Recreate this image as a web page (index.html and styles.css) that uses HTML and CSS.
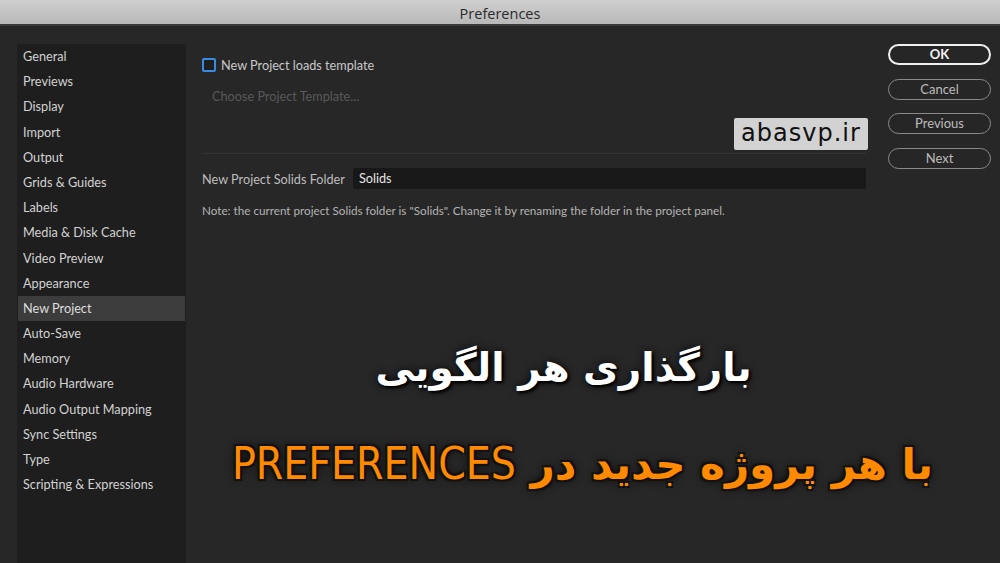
FILE: index.html
```html
<!DOCTYPE html>
<html lang="en">
<head>
<meta charset="utf-8">
<title>Preferences</title>
<link rel="stylesheet" href="styles.css">
</head>
<body>
<div class="titlebar">Preferences</div>
<div class="main">
  <ul class="sidebar">
    <li>General</li>
    <li>Previews</li>
    <li>Display</li>
    <li>Import</li>
    <li>Output</li>
    <li>Grids &amp; Guides</li>
    <li>Labels</li>
    <li>Media &amp; Disk Cache</li>
    <li>Video Preview</li>
    <li>Appearance</li>
    <li class="selected">New Project</li>
    <li>Auto-Save</li>
    <li>Memory</li>
    <li>Audio Hardware</li>
    <li>Audio Output Mapping</li>
    <li>Sync Settings</li>
    <li>Type</li>
    <li>Scripting &amp; Expressions</li>
  </ul>
  <div class="content">
    <label class="check-row"><span class="checkbox"></span><span>New Project loads template</span></label>
    <div class="choose">Choose Project Template...</div>
    <div class="separator"></div>
    <div class="field-row">
      <span class="field-label">New Project Solids Folder</span>
      <div class="field-input">Solids</div>
    </div>
    <p class="note">Note: the current project Solids folder is "Solids". Change it by renaming the folder in the project panel.</p>
  </div>
  <div class="buttons">
    <button class="btn primary">OK</button>
    <button class="btn">Cancel</button>
    <button class="btn">Previous</button>
    <button class="btn">Next</button>
  </div>
</div>
<div class="watermark">abasvp.ir</div>
<div class="headline line1" dir="rtl">بارگذاری هر الگویی</div>
<div class="headline line2" dir="rtl">با هر پروژه جدید در <span class="latin">PREFERENCES</span></div>
</body>
</html>
```
FILE: styles.css
```css
* { box-sizing: border-box; }
html, body { margin: 0; padding: 0; }
body {
  width: 1000px;
  height: 563px;
  overflow: hidden;
  background: #272727;
  font-family: Lato, "Open Sans", sans-serif;
  color: #cfcfcf;
  position: relative;
}
.titlebar {
  height: 26px;
  background: linear-gradient(#cfcfcf, #b9b9b9);
  border-bottom: 2px solid #3a3a3a;
  color: #2a2a2a;
  font-size: 14.5px;
  text-align: center;
  line-height: 27px;
  font-family: "Open Sans", Lato, sans-serif;
}
.main {
  display: flex;
  padding: 18px 9px 0 17px;
  height: 537px;
}
.sidebar {
  list-style: none;
  margin: 0;
  padding: 0;
  width: 169px;
  background: #1e1e1e;
  border-radius: 2px 2px 0 0;
  flex: none;
}
.sidebar li {
  height: 25.2px;
  line-height: 25.2px;
  padding-left: 5px;
  margin: 0 1px;
  font-size: 12.7px;
  color: #d2d2d2;
  white-space: nowrap;
}
.sidebar li.selected { background: #3c3c3c; color: #dedede; }
.content {
  width: 664px;
  margin-left: 16px;
  padding-top: 14px;
  flex: none;
}
.check-row {
  display: flex;
  align-items: center;
  gap: 5px;
  height: 14px;
  font-size: 12.7px;
  color: #c9c9c9;
}
.checkbox {
  width: 14px;
  height: 14px;
  border: 2px solid #3a8ae0;
  border-radius: 2px;
  background: #1f1f1f;
}
.choose {
  margin-top: 17px;
  padding-left: 10px;
  font-size: 12.7px;
  color: #595959;
  height: 15px;
  line-height: 15px;
}
.separator {
  margin-top: 49px;
  height: 1px;
  background: #343434;
}
.field-row {
  display: flex;
  align-items: center;
  margin-top: 14px;
  gap: 8px;
}
.field-label { font-size: 12.7px; color: #bdbdbd; white-space: nowrap; }
.field-input {
  flex: 1;
  height: 21px;
  line-height: 21px;
  background: #181818;
  border-radius: 2px;
  padding-left: 6px;
  font-size: 12.7px;
  color: #e6e6e6;
}
.note {
  margin: 14px 0 0;
  font-size: 11.7px;
  color: #b4b4b4;
  white-space: nowrap;
}
.buttons {
  margin-left: 22px;
  width: 103px;
  display: flex;
  flex-direction: column;
  gap: 13.5px;
  flex: none;
}
.btn {
  height: 21px;
  border-radius: 11px;
  border: 1.5px solid #8a8a8a;
  background: #262626;
  color: #bcbcbc;
  font-family: Lato, "Open Sans", sans-serif;
  font-size: 13px;
  padding: 0;
  line-height: 17px;
}
.btn.primary {
  border: 2px solid #f0f0f0;
  color: #f2f2f2;
  font-weight: bold;
}
.watermark {
  position: absolute;
  left: 734px;
  top: 118px;
  width: 134px;
  height: 32px;
  background: #d2d2d2;
  border-radius: 2px;
  color: #111;
  font-family: "DejaVu Sans", sans-serif;
  font-size: 24px;
  letter-spacing: 1px;
  text-align: center;
  line-height: 31px;
}
.headline {
  position: absolute;
  left: 0;
  right: 0;
  text-align: center;
  font-family: "DejaVu Sans", sans-serif;
  font-weight: bold;
  white-space: nowrap;
}
.line1 {
  top: 345px;
  padding-left: 127px;
  font-size: 39px;
  color: #fff;
  text-shadow: 0 0 8px rgba(0,0,0,0.9), 2px 2px 3px #000;
}
.line2 {
  top: 438px;
  padding-left: 165px;
  font-size: 42px;
  color: #ff8a00;
  text-shadow: -2px -2px 0 #111, 2px -2px 0 #111, -2px 2px 0 #111, 2px 2px 0 #111, 0 0 10px #000;
}
.latin {
  font-family: "Liberation Sans Narrow", "DejaVu Sans Condensed", sans-serif;
  font-weight: normal;
  font-size: 44px;
}
```
